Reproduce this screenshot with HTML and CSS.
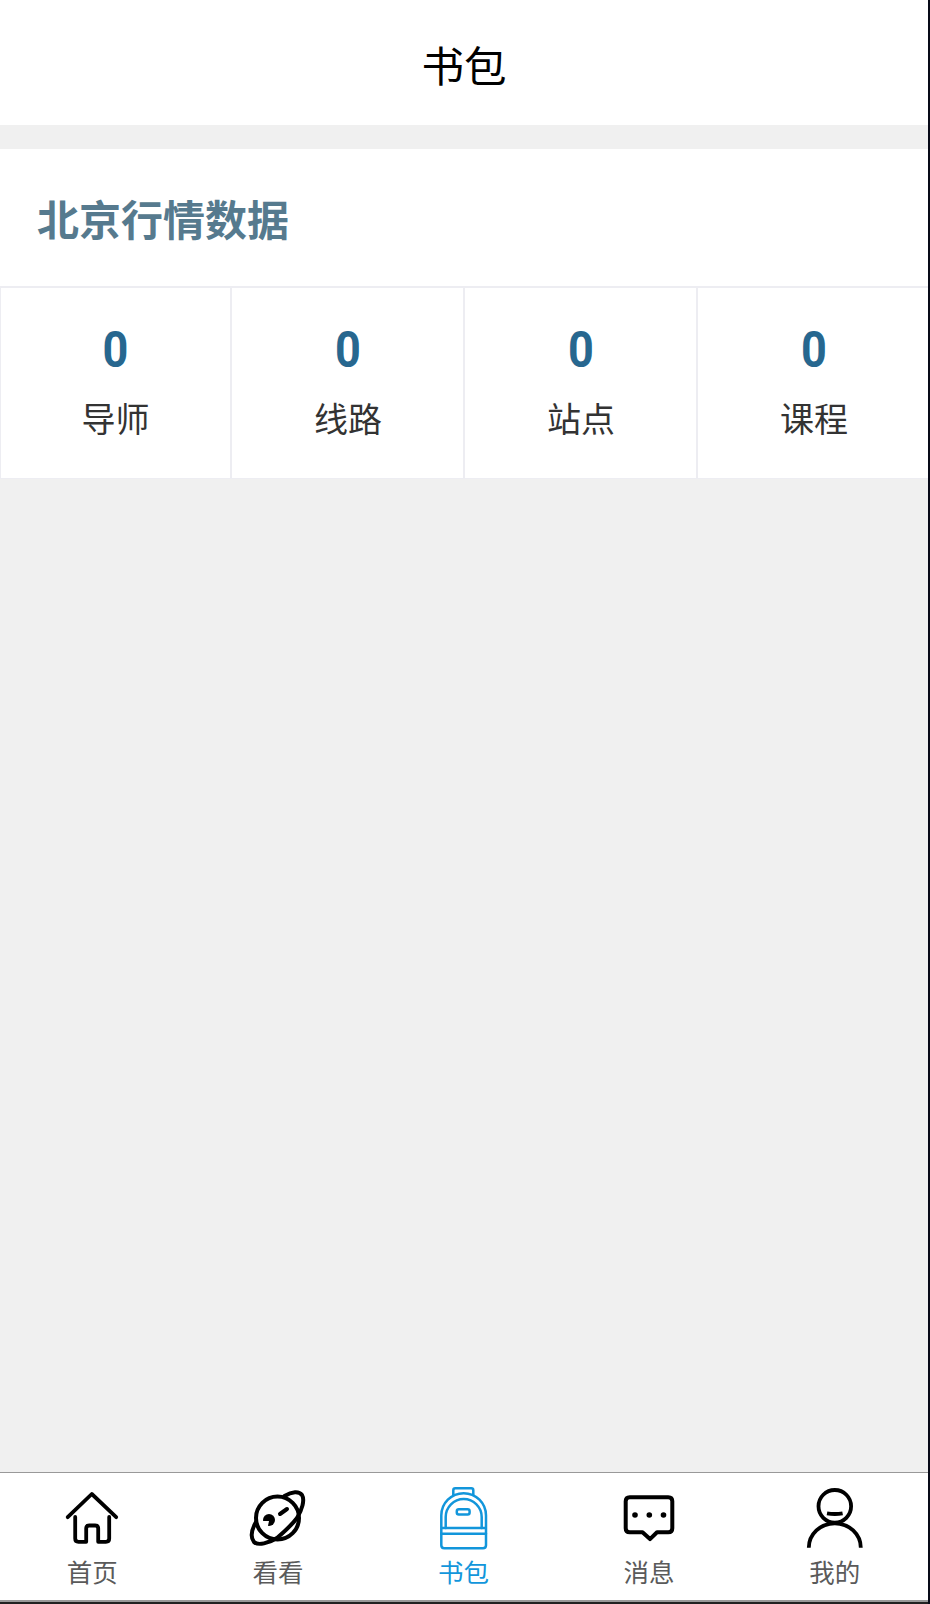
FILE: index.html
```html
<!DOCTYPE html>
<html lang="zh-CN">
<head>
    <title>书包</title>
    <meta charset="UTF-8">
    <meta name="viewport" content="width=device-width, initial-scale=1.0">
    <link rel="stylesheet" href="styles.css">
</head>
<body>
    <div class="app">
        <header class="header">书包</header>

        <section class="panel">
            <h2 class="panel-title">北京行情数据</h2>
            <div class="stats">
                <div class="stat">
                    <div class="stat-value">0</div>
                    <div class="stat-label">导师</div>
                </div>
                <div class="stat">
                    <div class="stat-value">0</div>
                    <div class="stat-label">线路</div>
                </div>
                <div class="stat">
                    <div class="stat-value">0</div>
                    <div class="stat-label">站点</div>
                </div>
                <div class="stat">
                    <div class="stat-value">0</div>
                    <div class="stat-label">课程</div>
                </div>
            </div>
        </section>

        <nav class="tabbar">
            <a class="tab">
                <svg class="tab-icon" viewBox="0 0 64 64" stroke-width="3.8">
                    <path d="M6.7 31.2 30.8 8l24.4 23.2"/>
                    <path d="M14.2 31v21.5q0 3.3 3.3 3.3h7.700V42.500q0-3 3-3h6q3 0 3 3v13.300h7.700q3.300 0 3.300-3.300V31"/>
                </svg>
                <span>首页</span>
            </a>
            <a class="tab">
                <svg class="tab-icon" viewBox="0 0 64 64" stroke-width="4">
                    <circle cx="31.5" cy="32" r="21.500"/>
                    <path d="M38.500 10C46 5.500 53 5 56 9c3 5 0 15-5 23-6 8-13 14-20 20-8 5-19 8-23 4-4-5-2-13 2-20"/>
                    <circle class="fill" cx="23" cy="34" r="6"/>
                    <path class="cut" d="M23 35h-7v7h5.500z"/>
                    <path d="M34 28l7-5"/>
                </svg>
                <span>看看</span>
            </a>
            <a class="tab active">
                <svg class="tab-icon" viewBox="0 0 64 64" stroke-width="2.500">
                    <path d="M21.300 9V4.300q0-2 2-2h16q2 0 2 2V9"/>
                    <path d="M9.300 42V29.500a22.300 22.300 0 0 1 44.700 0V59.300q0 3-3 3H12.300q-3 0-3-3V42H54"/>
                    <path d="M13.700 42V31a18 18 0 0 1 36 0v11M9.300 47.700H54"/>
                    <rect x="24.800" y="23.300" width="12.800" height="5.200" rx="2"/>
                </svg>
                <span>书包</span>
            </a>
            <a class="tab">
                <svg class="tab-icon" viewBox="0 0 64 64" stroke-width="4">
                    <path d="M11.700 11.300h38.600q4 0 4 4v27q0 4-4 4H39l-7 6.800-7.500-6.800H11.700q-4 0-4-4v-27q0-4 4-4z"/>
                    <circle class="fill" cx="17" cy="29" r="2.800"/>
                    <circle class="fill" cx="31.300" cy="29" r="2.800"/>
                    <circle class="fill" cx="45.500" cy="29" r="2.800"/>
                </svg>
                <span>消息</span>
            </a>
            <a class="tab">
                <svg class="tab-icon" viewBox="0 0 64 64" stroke-width="3.800">
                    <circle cx="31.800" cy="20.300" r="16.300"/>
                    <path class="butt" d="M24 27.300q7.800 1.400 15.600 0"/>
                    <path class="butt" d="M5.800 61.800a26 24.500 0 0 1 52 0"/>
                </svg>
                <span>我的</span>
            </a>
        </nav>
    </div>
</body>
</html>
```
FILE: styles.css
```css
* {
    box-sizing: border-box;
}

body {
    margin: 0;
    background: #080a18;
    font-family: Roboto, "Noto Sans CJK SC", sans-serif;
}

.app {
    display: flex;
    flex-direction: column;
    width: 928px;
    height: 1604px;
    background: #f0f0f0;
    border-bottom: 2px solid #222;
}

.header {
    height: 125px;
    padding-top: 8px;
    line-height: 120px;
    background: #fff;
    color: #000;
    font-size: 42.5px;
    text-align: center;
}

.panel {
    margin-top: 24px;
    background: #fff;
}

.panel-title {
    margin: 0;
    height: 137px;
    padding-left: 37px;
    line-height: 145px;
    color: #567a8e;
    font-size: 42px;
    font-weight: bold;
}

.stats {
    display: grid;
    grid-template-columns: 231px 233px 233px 231px;
    height: 193px;
    border-top: 2px solid #ededf2;
    border-left: 1px solid #ededf2;
    border-bottom: 1px solid #ededf2;
}

.stat {
    padding-top: 33px;
    border-right: 2px solid #ededf2;
    text-align: center;
}

.stat + .stat {
    padding-left: 1px;
}

.stat:last-child {
    border-right: none;
}

.stat-value {
    height: 58px;
    line-height: 58px;
    color: #27678f;
    font-size: 50px;
    font-weight: bold;
    transform: scaleX(0.9);
}

.stat-label {
    margin-top: 16px;
    line-height: 50px;
    color: #333;
    font-size: 34px;
}

.tabbar {
    display: flex;
    height: 130px;
    margin-top: auto;
    background: #fff;
    border-top: 1px solid #999;
    border-bottom: 2px solid #999;
}

.tab {
    flex: 1;
    display: flex;
    flex-direction: column;
    align-items: center;
    padding-top: 13px;
    color: #5a5a5a;
    font-size: 25.5px;
    line-height: 36px;
}

.tab span {
    margin-top: 5px;
    margin-right: 1px;
}

.tab-icon {
    width: 64px;
    height: 64px;
    fill: none;
    stroke: #000;
    stroke-linecap: round;
    stroke-linejoin: round;
}

.tab-icon .fill {
    fill: #000;
    stroke: none;
}

.tab-icon .cut {
    fill: #fff;
    stroke: none;
}

.tab-icon .butt {
    stroke-linecap: butt;
}

.tab.active {
    color: #1296db;
}

.tab.active .tab-icon {
    stroke: #1296db;
}
```
